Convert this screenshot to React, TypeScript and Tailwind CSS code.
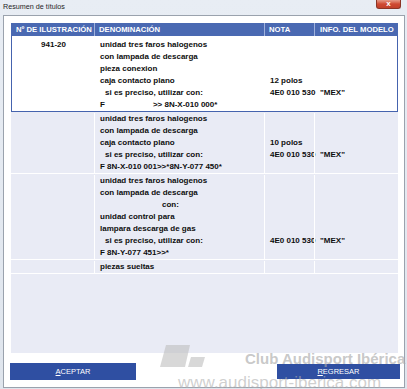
import React from "react";

type Line = { t: string; indent?: number; tail?: string };

type Row = {
  selected?: boolean;
  ilu: string[];
  den: Line[];
  nota: string[];
  info: string[];
};

const SI_ES: Line = { t: "si es preciso, utilizar con:", indent: 5 };

const rows: Row[] = [
  {
    selected: true,
    ilu: ["941-20"],
    den: [
      { t: "unidad tres faros halogenos" },
      { t: "con lampada de descarga" },
      { t: "pieza conexion" },
      { t: "caja contacto plano" },
      SI_ES,
      { t: "F", tail: ">> 8N-X-010 000*" },
    ],
    nota: ["", "", "", "12 polos", "4E0 010 530", ""],
    info: ["", "", "", "", '"MEX"', ""],
  },
  {
    ilu: [],
    den: [
      { t: "unidad tres faros halogenos" },
      { t: "con lampada de descarga" },
      { t: "caja contacto plano" },
      SI_ES,
      { t: "F 8N-X-010 001>>*8N-Y-077 450*" },
    ],
    nota: ["", "", "10 polos", "4E0 010 530", ""],
    info: ["", "", "", '"MEX"', ""],
  },
  {
    ilu: [],
    den: [
      { t: "unidad tres faros halogenos" },
      { t: "con lampada de descarga" },
      { t: "con:", indent: 62 },
      { t: "unidad control para" },
      { t: "lampara descarga de gas" },
      SI_ES,
      { t: "F 8N-Y-077 451>>*" },
    ],
    nota: ["", "", "", "", "", "4E0 010 530", ""],
    info: ["", "", "", "", "", '"MEX"', ""],
  },
  {
    ilu: [],
    den: [{ t: "piezas sueltas" }],
    nota: [""],
    info: [""],
  },
];

function Cell({ lines, className = "" }: { lines: string[]; className?: string }) {
  return (
    <div className={className}>
      {lines.map((l, i) => (
        <div key={i} className="h-[12px] whitespace-pre leading-[12px]">
          {l}
        </div>
      ))}
    </div>
  );
}

function TableRow({ row }: { row: Row }) {
  const sep = row.selected ? "" : "border-l border-white";
  return (
    <div
      className={`grid grid-cols-[83px_170px_50px_84px] ${
        row.selected
          ? "border-x border-b border-[#4563ae] bg-white pt-[3px]"
          : "border-b border-white bg-[#e9ebf5] pt-px"
      }`}
    >
      <Cell lines={row.ilu} className="text-center" />
      <div className={`pl-[5px] ${sep}`}>
        {row.den.map((l, i) => (
          <div
            key={i}
            className="flex h-[12px] whitespace-pre leading-[12px]"
            style={l.indent ? { paddingLeft: l.indent } : undefined}
          >
            <span>{l.t}</span>
            {l.tail && <span className="ml-[48px]">{l.tail}</span>}
          </div>
        ))}
      </div>
      <Cell lines={row.nota} className={`pl-[5px] ${sep}`} />
      <Cell lines={row.info} className={`pl-[5px] ${sep}`} />
    </div>
  );
}

export default function App() {
  return (
    <div className="relative h-[389px] w-[407px] overflow-hidden bg-gradient-to-b from-[#e8edf4] to-[#dfe5ed] font-['Liberation_Sans',Arial,sans-serif]">
      <div className="flex h-[15px] items-start">
        <span className="ml-[3px] mt-[2px] text-[7.2px] leading-[10px] text-[#1e1e1e]">
          Resumen de títulos
        </span>
        <div className="ml-auto mr-[6px] flex h-[9px] w-[25px] items-center justify-center rounded-b-[3px] border border-t-0 border-[#8a3526] bg-gradient-to-b from-[#e49a88] via-[#cf4a32] to-[#c2412b]">
          <span className="text-[8px] font-bold leading-[8px] text-white">x</span>
        </div>
      </div>

      <div className="ml-[3px] mr-[2px] flex h-[373px] flex-col border border-[#9aa2ad] bg-white">
        <div className="ml-[7px] mt-[7px] flex h-[330px] w-[387px] flex-col bg-[#e9ebf5] text-[8px] font-bold text-[#0e0e0e]">
          <div className="grid h-[13px] grid-cols-[83px_170px_50px_84px] bg-[#4a69b2] text-[7.7px] leading-[13px] text-white">
            <div className="pl-[5px]">Nº DE ILUSTRACIÓN</div>
            <div className="border-l border-[#9fb1dc] pl-[4px]">DENOMINACIÓN</div>
            <div className="border-l border-[#9fb1dc] pl-[4px]">NOTA</div>
            <div className="border-l border-[#9fb1dc] pl-[5px]">INFO. DEL MODELO</div>
          </div>
          {rows.map((row, i) => (
            <TableRow key={i} row={row} />
          ))}
        </div>

        <div className="mt-[10px] flex items-start justify-between pl-[6px] pr-[4px]">
          <button className="h-[17px] w-[126px] bg-[#2f4fa2] text-[7.5px] leading-[17px] text-white">
            <span className="underline">A</span>CEPTAR
          </button>
          <button className="mt-px h-[15px] w-[123px] bg-[#2f4fa2] text-[7.5px] leading-[15px] text-white">
            <span className="underline">R</span>EGRESAR
          </button>
        </div>
      </div>

      <div className="pointer-events-none absolute left-[160px] top-[345px]">
        <svg width="46" height="23" viewBox="0 0 46 23">
          <polygon points="6,0 30,0 25,22 0,22" fill="rgba(190,190,190,0.6)" />
          <polygon points="31,12 45,12 42,22 28,22" fill="rgba(190,190,190,0.6)" />
        </svg>
      </div>
      <div className="pointer-events-none absolute left-[245px] top-[350px] whitespace-nowrap text-[15px] font-bold leading-[18px] text-[rgba(170,170,170,0.65)]">
        Club Audisport Ibérica
      </div>
      <div className="pointer-events-none absolute left-[178px] top-[373px] whitespace-nowrap text-[17px] leading-[20px] text-[rgba(175,175,175,0.6)]">
        www.audisport-iberica.com
      </div>
    </div>
  );
}
